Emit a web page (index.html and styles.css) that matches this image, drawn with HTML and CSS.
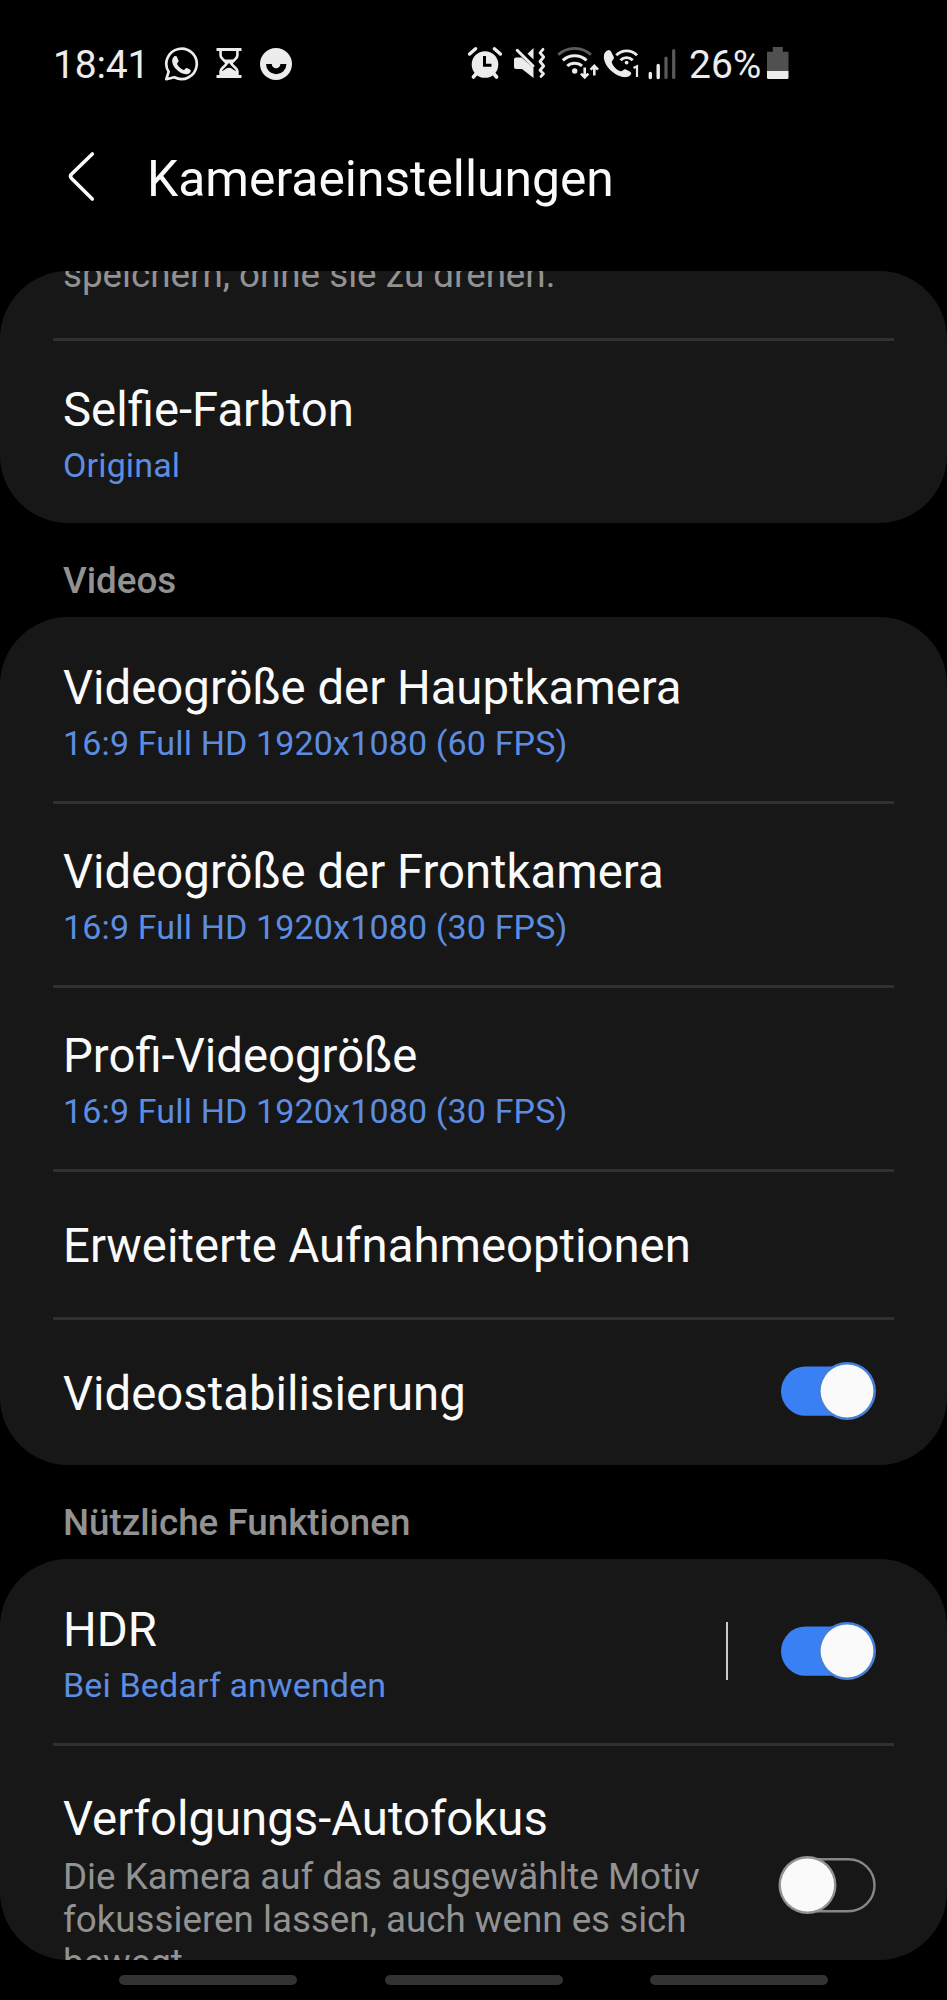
FILE: index.html
```html
<!DOCTYPE html>
<html lang="de">
<head>
<meta charset="utf-8">
<title>Kameraeinstellungen</title>
<link rel="stylesheet" href="styles.css">
</head>
<body>
<div class="screen">
  <header class="status">
    <div class="status-left">
      <span class="clock">18:41</span>
      <svg class="icon" width="36" height="36" viewBox="163 46 36 36">
        <path d="M166.3 79.2 L168.6 71.8 A15.2 15.2 0 1 1 174.3 77.2 Z" fill="none" stroke="#ececec" stroke-width="2.7" stroke-linejoin="round"/>
        <path d="M173.2 57.5c1.6-2 3.300-1.700 4 0l1.300 3.100c.6 1.500-2 2.400-1.200 3.800 1.500 2.700 3.500 4.400 6.200 5.500 1.300.5 1.900-2.500 3.400-1.900l3 1.500c1.600.8.9 3.300-1.300 4.300-3.800 1.700-9.200-.9-12.600-4.700-3.300-3.700-5.100-8.400-2.800-11.600z" fill="#ececec"/>
      </svg>
      <svg class="icon" width="26" height="34" viewBox="216 46 26 34">
        <path d="M216.500 48h25v3h-25zM216.500 75h25v3h-25z" fill="#ececec"/>
        <path d="M220.600 50v5.500c0 3.500 5.700 5.500 5.700 8s-5.700 4.500-5.700 8V76M237.400 50v5.500c0 3.500-5.700 5.500-5.700 8s5.700 4.500 5.700 8V76" fill="none" stroke="#ececec" stroke-width="2.600"/>
        <path d="M222.500 59.500h13l-4 4v2l-2.500-2.500-2.500 2.500v-2z" fill="#ececec"/>
        <path d="M221 76v-5c3.500 0 4.500-3.300 8-3.300s4.500 3.300 8 3.300v5z" fill="#ececec"/>
      </svg>
      <svg class="icon" width="34" height="36" viewBox="259 46 34 36">
        <circle cx="276" cy="64" r="16" fill="#ececec"/>
        <path d="M266 64h5.800a4.300 4.300 0 0 0 8.600 0h6a10.200 10.200 0 0 1-20.400 0z" fill="#000"/>
      </svg>
    </div>
    <div class="status-right">
      <svg class="icon" width="36" height="34" viewBox="467 46 36 34">
        <circle cx="485" cy="64.500" r="13.300" fill="#ececec"/>
        <path d="M469.600 54l6-5.300M500.400 54l-6-5.300" stroke="#ececec" stroke-width="3.400" stroke-linecap="round"/>
        <path d="M476 74l-2.600 3M494 74l2.600 3" stroke="#ececec" stroke-width="3.600" stroke-linecap="round"/>
        <path d="M484.500 56v9.200h7" fill="none" stroke="#000" stroke-width="3"/>
      </svg>
      <svg class="icon mute" width="34" height="34" viewBox="513 46 34 34">
        <path d="M514 59.500q0-2 2-2h5.500l12 10.500v10l-11.500-9h-6q-2 0-2-2z" fill="#ececec"/>
        <path d="M533.500 48v11.500l-6-5.800z" fill="#ececec"/>
        <path d="M517.200 50.300L533 66" stroke="#ececec" stroke-width="3" stroke-linecap="round"/>
        <path d="M543 49.300l-3 3.500 3.700 4.200-3.700 4.500 3.700 4.500-3.700 4.200 3.500 3.600-2.500 2.600" fill="none" stroke="#ececec" stroke-width="2.800" stroke-linecap="round" stroke-linejoin="round"/>
      </svg>
      <svg class="icon wifi" width="43" height="35" viewBox="556 46 43 35">
        <path d="M558.200 54.800A24 24 0 0 1 591 54.800" fill="none" stroke="#5c5c5c" stroke-width="2.800"/>
        <path d="M562.800 60.300A17.500 17.500 0 0 1 586.600 60.300" fill="none" stroke="#ececec" stroke-width="3"/>
        <path d="M567.300 66A11 11 0 0 1 582 66" fill="none" stroke="#ececec" stroke-width="3"/>
        <circle cx="574.700" cy="71" r="2.700" fill="#ececec"/>
        <path d="M584.700 67.500v9.500M581 73.700l3.700 3.800 3.700-3.800M594.300 75.500v-9.500M590.600 69.600l3.700-3.800 3.700 3.800" fill="none" stroke="#ececec" stroke-width="2.600"/>
      </svg>
      <svg class="icon" width="37" height="34" viewBox="603 46 37 34">
        <path d="M604.200 54c.8-2 3-3.800 4.500-4q1.500 0 2.300 1.500l2.800 5.600c1 2-2.300 3.500-2 5.200 1 4 5 7.800 8.800 9 1.700.4 3.500-2.800 5.400-1.800l4.200 2.300q1.500 1 .8 2.500c-1 2.200-4.500 3.200-7.500 2.800-10.800-1.500-21.800-13.500-19.300-23.100z" fill="#ececec"/>
        <path d="M616.300 55.200A14.500 14.500 0 0 1 637 55.200M620.500 60.200A8.600 8.600 0 0 1 632.700 60.200" fill="none" stroke="#ececec" stroke-width="2.900"/>
        <circle cx="626.600" cy="62.600" r="1.900" fill="#ececec"/>
        <path d="M633.500 68l3.500-1.800V77" fill="none" stroke="#ececec" stroke-width="2.200"/>
      </svg>
      <svg class="icon bars" width="28" height="34" viewBox="648 46 28 34">
        <path d="M650.300 73.500v4M658.200 65.500v12" stroke="#ececec" stroke-width="3.400" stroke-linecap="round"/>
        <path d="M666 58v19.500M673.700 50.500v27" stroke="#5a5a5a" stroke-width="3.200" stroke-linecap="round"/>
      </svg>
      <span class="percent">26%</span>
      <svg class="icon battery" width="22" height="34" viewBox="767 46 22 34">
        <path d="M772.800 47h10v4.700h5.700V71H767V51.700h5.800z" fill="#505050"/>
        <path d="M767 71h21.500v6.500q0 1.500-1.500 1.500h-18.500q-1.500 0-1.500-1.500z" fill="#ececec"/>
      </svg>
    </div>
  </header>

  <div class="appbar">
    <svg class="back" width="30" height="54" viewBox="66 150 30 54">
      <path d="M92.300 154L71.400 174.300q-1.800 2 0 4L92.300 199" fill="none" stroke="#fafafa" stroke-width="3.600" stroke-linecap="round" stroke-linejoin="round"/>
    </svg>
    <h1 class="heading">Kameraeinstellungen</h1>
  </div>

  <main class="content">
    <section class="card card-top">
      <div class="row row-cut"><p class="desc">speichern, ohne sie zu drehen.</p></div>
      <div class="row row-selfie">
        <div class="title">Selfie-Farbton</div>
        <div class="value">Original</div>
      </div>
    </section>

    <h2 class="group">Videos</h2>

    <section class="card card-videos">
      <div class="row row-first">
        <div class="title">Videogröße der Hauptkamera</div>
        <div class="value">16:9 Full HD 1920x1080 (60 FPS)</div>
      </div>
      <div class="row">
        <div class="title">Videogröße der Frontkamera</div>
        <div class="value">16:9 Full HD 1920x1080 (30 FPS)</div>
      </div>
      <div class="row">
        <div class="title">Profi-Videogröße</div>
        <div class="value">16:9 Full HD 1920x1080 (30 FPS)</div>
      </div>
      <div class="row row-single"><div class="title">Erweiterte Aufnahmeoptionen</div></div>
      <div class="row row-single row-switch">
        <div class="title">Videostabilisierung</div>
        <svg class="switch" width="96" height="60" viewBox="0 0 96 60">
          <rect x="1" y="5.500" width="90" height="49.300" rx="24.600" fill="#3a80f5"/>
          <circle cx="67" cy="30" r="29" fill="#4680d6"/>
          <circle cx="67" cy="30" r="26.400" fill="#fafafa"/>
        </svg>
      </div>
    </section>

    <h2 class="group">Nützliche Funktionen</h2>

    <section class="card card-useful">
      <div class="row row-switch row-hdr">
        <div class="text">
          <div class="title">HDR</div>
          <div class="value">Bei Bedarf anwenden</div>
        </div>
        <span class="separator"></span>
        <svg class="switch" width="96" height="60" viewBox="0 0 96 60">
          <rect x="1" y="5.500" width="90" height="49.300" rx="24.600" fill="#3a80f5"/>
          <circle cx="67" cy="30" r="29" fill="#4680d6"/>
          <circle cx="67" cy="30" r="26.400" fill="#fafafa"/>
        </svg>
      </div>
      <div class="row row-switch row-focus">
        <div class="text">
          <div class="title">Verfolgungs-Autofokus</div>
          <p class="desc">Die Kamera auf das ausgewählte Motiv<br>fokussieren lassen, auch wenn es sich<br>bewegt.</p>
        </div>
        <svg class="switch" width="98" height="60" viewBox="0 0 98 60">
          <rect x="4" y="4.200" width="92.500" height="52" rx="26" fill="none" stroke="#868686" stroke-width="2.400"/>
          <circle cx="29.500" cy="30" r="29" fill="#929292"/>
          <circle cx="29.500" cy="30" r="26.600" fill="#fafafa"/>
        </svg>
      </div>
    </section>
  </main>

  <nav class="navbar"><span class="pill"></span><span class="pill"></span><span class="pill"></span></nav>
</div>
</body>
</html>
```
FILE: styles.css
```css
* { box-sizing: border-box; margin: 0; padding: 0; }

body {
  background: #000;
  color: #fafafa;
  font-family: Roboto, "Noto Sans", sans-serif;
}

.screen {
  width: 947px;
  height: 2000px;
  display: flex;
  flex-direction: column;
  overflow: hidden;
}

.status {
  height: 100px;
  padding: 46px 158px 0 53px;
  display: flex;
  justify-content: space-between;
  align-items: flex-start;
  color: #ececec;
}

.status-left, .status-right { display: flex; align-items: flex-start; }
.status-left { gap: 17px; }
.status-right { gap: 4px; }
.icon { display: block; flex: none; }
.mute { margin-left: 6px; }
.wifi { margin-left: 5px; }
.bars { margin-left: 4px; }
.battery { margin-left: 2px; }

.clock, .percent {
  font-size: 39px;
  line-height: 38px;
  white-space: nowrap;
}
.clock { width: 93px; letter-spacing: -0.2px; }
.percent { width: 72px; margin-left: 9px; }

.appbar {
  height: 171px;
  padding: 50px 0 0 66px;
  display: flex;
  align-items: flex-start;
  gap: 51px;
}
.back { flex: none; }
.heading { font-size: 49.8px; line-height: 58px; font-weight: 400; }

.card {
  background: #171717;
  border-radius: 68px;
  overflow: hidden;
}
.card-top { height: 252px; }
.card-videos { height: 848px; }
.card-useful { height: 401px; }

.row {
  height: 184px;
  margin: 0 53px;
  padding: 40px 0 0 10px;
  border-bottom: 3px solid #303030;
}
.row:last-child { border-bottom: 0; }
.row-cut { display: flex; align-items: flex-start; height: 70px; padding-top: 0; }
.row-cut .desc { margin-top: -18px; }
.row-selfie { padding-top: 41px; }
.row-first { height: 187px; padding-top: 43px; }
.row-single { height: 148px; padding-top: 46px; }

.title { font-size: 47.3px; line-height: 56px; white-space: nowrap; }
.value {
  margin-top: 6px;
  font-size: 34px;
  line-height: 42px;
  letter-spacing: 0.15px;
  color: #5c8de0;
  white-space: nowrap;
}
.desc { font-size: 36.75px; line-height: 43px; color: #929292; white-space: nowrap; }

.group {
  height: 94px;
  padding: 36px 63px 0;
  font-size: 36.75px;
  line-height: 44px;
  font-weight: 500;
  color: #929292;
}

.row-switch { display: flex; justify-content: space-between; padding-right: 18px; }
.switch { display: block; flex: none; overflow: visible; }
.row-single .switch { margin-top: -5px; }
.row-hdr { height: 187px; padding-top: 43px; }
.row-hdr .text { flex: 1; }
.row-hdr .switch { margin-top: 19px; }
.separator { width: 2px; height: 58px; margin: 20px 52px 0 0; background: #c8c8c8; }
.row-focus { height: 300px; padding-top: 45px; }
.row-focus .desc { margin-top: 8px; }
.row-focus .switch { margin-top: 64px; }

.navbar {
  height: 40px;
  padding: 15px 119px 0;
  display: flex;
  justify-content: space-between;
}
.pill { width: 178px; height: 10px; border-radius: 5px; background: #333; }
```
